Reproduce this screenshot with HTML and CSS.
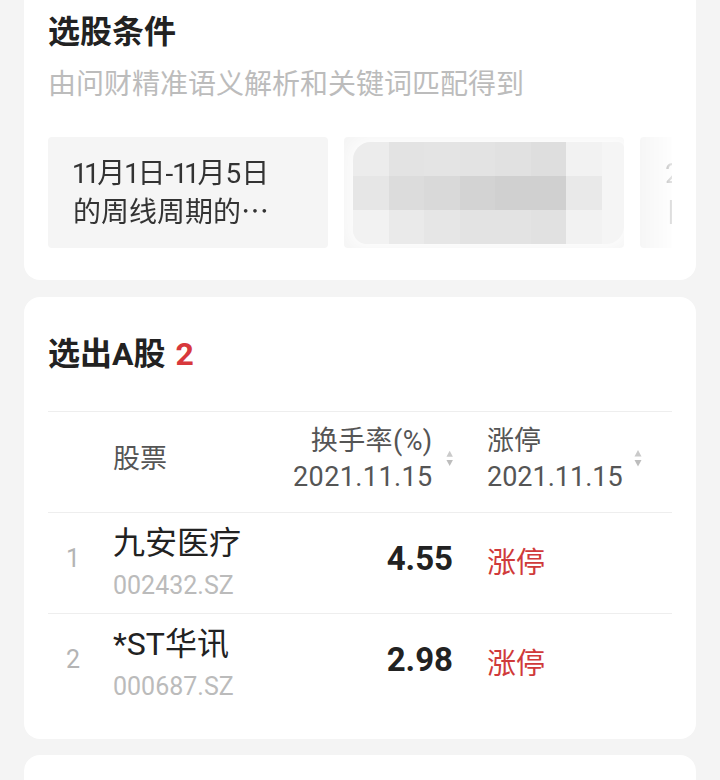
FILE: index.html
```html
<!DOCTYPE html>
<html lang="zh-CN">
<head>
    <meta charset="UTF-8">
    <meta name="viewport" content="width=device-width, initial-scale=1.0">
    <title>选股结果</title>
    <link rel="stylesheet" href="styles.css">
</head>
<body>
    <div class="page">
        <!-- Conditions card (scrolled, top edge is off screen) -->
        <section class="card card-top">
            <h2 class="card-title">选股条件</h2>
            <p class="card-sub">由问财精准语义解析和关键词匹配得到</p>
            <div class="chips">
                <div class="chip">
                    <span>11月1日-11月5日</span>
                    <span>的周线周期的⋯</span>
                </div>
                <div class="chip chip-masked">
                    <div class="mosaic">
                        <i class="m1"></i><i class="m2"></i><i class="m3"></i><i class="m2"></i><i class="m4"></i><i class="m5"></i><i class="m0"></i>
                        <i class="m6"></i><i class="m7"></i><i class="m8"></i><i class="m9"></i><i class="m10"></i><i class="m10"></i><i class="m11"></i>
                        <i class="m0"></i><i class="m12"></i><i class="m13"></i><i class="m2"></i><i class="m2"></i><i class="m4"></i><i class="m0"></i>
                    </div>
                </div>
                <div class="chip">
                    <span>2021.11.15</span>
                    <span>日线周期的⋯</span>
                </div>
            </div>
        </section>

        <!-- Result table -->
        <section class="card">
            <h2 class="card-title">选出A股 <em class="count">2</em></h2>
            <div class="table">
                <div class="row head">
                    <div></div>
                    <div class="th-name">股票</div>
                    <div class="th th-value">
                        <div class="th-text">换手率(%)<br>2021.11.15</div>
                        <svg class="sort" width="8" height="20" viewBox="0 0 8 20">
                            <path d="M4 1 L7.5 7.5 L0.5 7.5 Z" fill="#cacaca"/>
                            <path d="M0.5 11 L7.5 11 L4 17.5 Z" fill="#bdbdbd"/>
                        </svg>
                    </div>
                    <div class="th th-limit">
                        <div class="th-text">涨停<br>2021.11.15</div>
                        <svg class="sort" width="8" height="20" viewBox="0 0 8 20">
                            <path d="M4 1 L7.5 7.5 L0.5 7.5 Z" fill="#cacaca"/>
                            <path d="M0.5 11 L7.5 11 L4 17.5 Z" fill="#bdbdbd"/>
                        </svg>
                    </div>
                </div>

                <div class="row">
                    <div class="idx">1</div>
                    <div class="stock">
                        <div class="stock-name">九安医疗</div>
                        <div class="stock-code">002432.SZ</div>
                    </div>
                    <div class="value">4.55</div>
                    <div class="limit">涨停</div>
                </div>

                <div class="row">
                    <div class="idx">2</div>
                    <div class="stock">
                        <div class="stock-name">*ST华讯</div>
                        <div class="stock-code">000687.SZ</div>
                    </div>
                    <div class="value">2.98</div>
                    <div class="limit">涨停</div>
                </div>
            </div>
        </section>

        <section class="card card-next"></section>
    </div>
</body>
</html>
```

FILE: styles.css
```css
body {
    margin: 0;
    background: #f4f4f4;
    font-family: Roboto, "Noto Sans CJK SC", sans-serif;
    color: #222;
}
.page {
    display: flex;
    flex-direction: column;
    gap: 16px;
    padding: 0 24px;
    height: 780px;
    overflow: hidden;
}
.card {
    background: #fff;
    border-radius: 16px;
    padding: 36px 24px 25px;
}
.card-top {
    border-radius: 0 0 16px 16px;
    padding: 11px 24px 32px;
    margin-bottom: 1px;
}
.card-next { flex: 1; padding: 0; border-radius: 16px 16px 0 0; }

.card-title {
    margin: 0;
    font-size: 32px;
    line-height: 42px;
    font-weight: 700;
    color: #222;
}
.count { font-style: normal; color: #d8383c; padding-left: 2px; }
.card-sub {
    margin: 12px 0 0;
    font-size: 28px;
    line-height: 40px;
    color: #bcbcbc;
}

/* Condition chips */
.chips {
    display: flex;
    gap: 16px;
    margin-top: 32px;
    overflow: hidden;
    -webkit-mask-image: linear-gradient(to right, #000 588px, rgba(0,0,0,0.15) 623px);
    mask-image: linear-gradient(to right, #000 588px, rgba(0,0,0,0.15) 623px);
}
.chip {
    flex: 0 0 280px;
    height: 111px;
    box-sizing: border-box;
    padding: 17px 25px 15px;
    background: #f5f5f5;
    border-radius: 4px;
    display: flex;
    flex-direction: column;
    font-size: 28px;
    line-height: 39px;
    color: #333;
    white-space: nowrap;
    font-variant-numeric: proportional-nums;
}
.chip-masked { padding: 5px 0 0 9px; }
.mosaic {
    display: grid;
    grid-template-columns: repeat(7, 35.5px);
    grid-auto-rows: 34px;
    filter: blur(0.6px);
    box-shadow: 0 0 14px 6px rgba(255, 255, 255, 0.7);
    border-radius: 18px 6px 18px 14px;
    overflow: hidden;
}
.mosaic i { display: block; }
.m0 { background: #f2f2f2; }
.m1 { background: #ececec; }
.m2 { background: #e3e3e3; }
.m3 { background: #e4e4e4; }
.m4 { background: #e1e1e1; }
.m5 { background: #dedede; }
.m6 { background: #e6e6e6; }
.m7 { background: #dcdcdc; }
.m8 { background: #d9d9d9; }
.m9 { background: #d3d3d3; }
.m10 { background: #d0d0d0; }
.m11 { background: #e9e9e9; }
.m12 { background: #eaeaea; }
.m13 { background: #e6e6e6; }

/* Result table */
.table { margin-top: 36px; }
.row {
    display: grid;
    grid-template-columns: 65px 1fr 160px 219px;
    align-items: center;
    border-top: 1px solid #eeeeee;
    padding: 12px 0 9px;
}
.row.head {
    padding: 11px 0 17px;
    border-bottom: 1px solid #eeeeee;
    font-size: 27px;
    line-height: 36px;
    color: #555;
}
.row.head + .row { border-top: none; }
.th { display: flex; align-items: center; }
.th-value { justify-content: flex-end; gap: 13px; }
.th-value .th-text { text-align: right; letter-spacing: 0.4px; }
.th-limit { padding-left: 34px; gap: 11px; }
.sort { display: block; }

.idx {
    padding: 0 0 12px 18px;
    font-size: 25px;
    color: #b4b4b4;
}
.stock-name {
    font-size: 32px;
    line-height: 36px;
    color: #222;
}
.stock-code {
    margin-top: 7px;
    font-size: 25px;
    line-height: 36px;
    color: #bbb;
}
.value {
    padding-bottom: 12px;
    text-align: right;
    font-size: 33px;
    font-weight: 700;
    color: #222;
}
.limit {
    padding: 0 0 10px 34px;
    font-size: 29px;
    color: #d03a3a;
}
```
